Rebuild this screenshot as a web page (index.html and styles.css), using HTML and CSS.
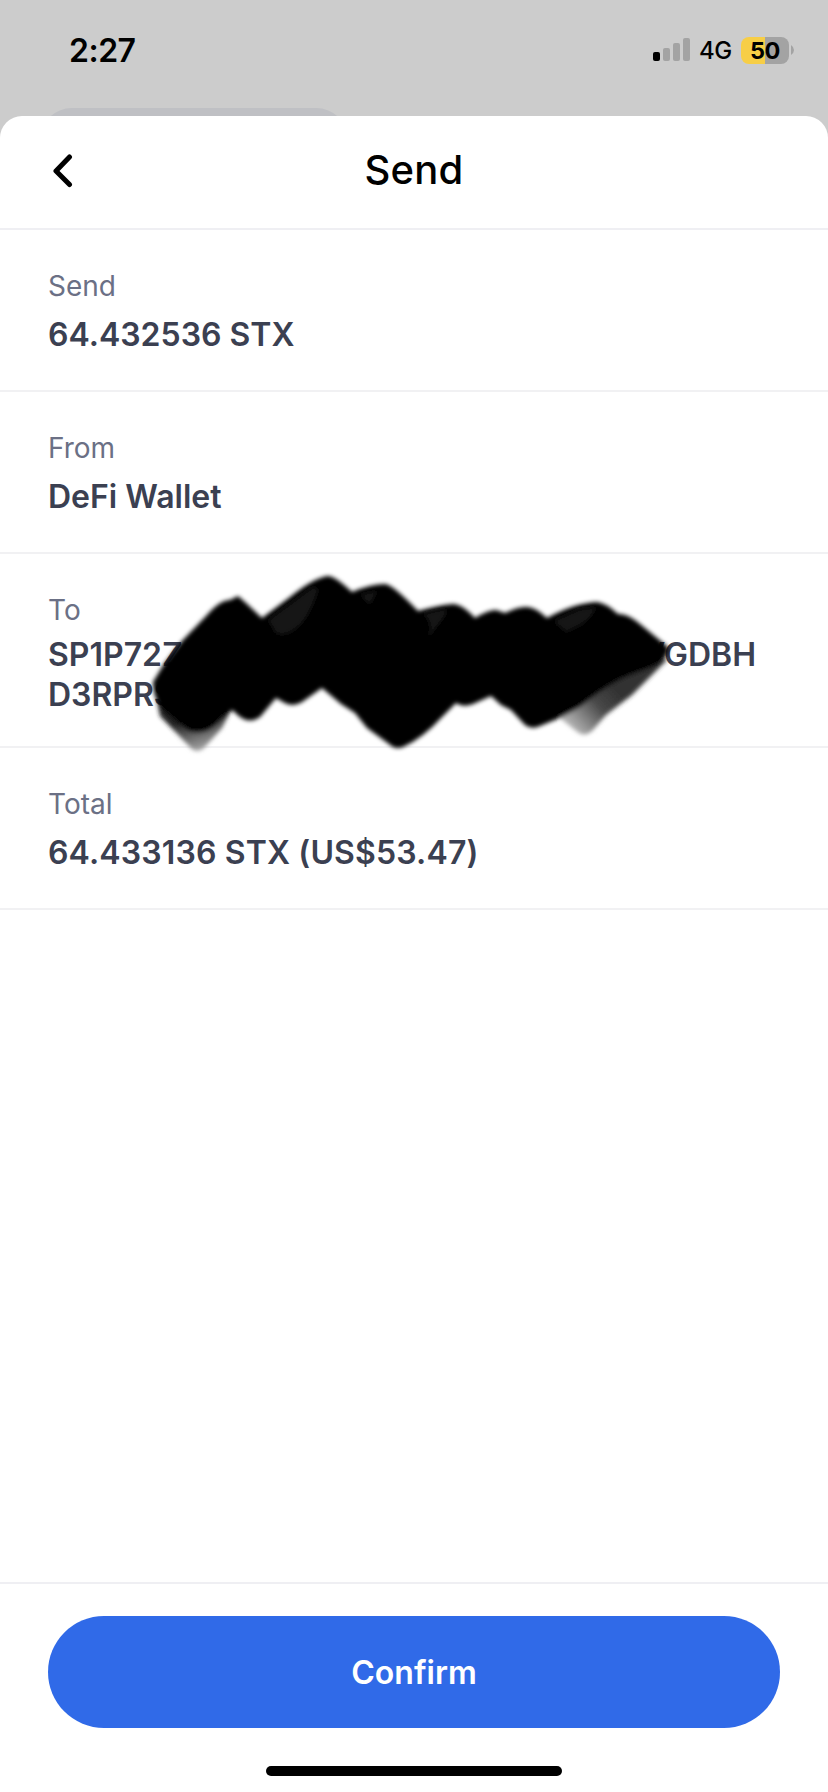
FILE: index.html
```html
<!DOCTYPE html>
<html lang="en">
<head>
<meta charset="utf-8">
<title>Send</title>
<link rel="stylesheet" href="styles.css">
</head>
<body>
<div class="screen">
  <header class="status">
    <span class="time">2:27</span>
    <div class="indicators">
      <svg class="signal" width="37" height="24" viewBox="0 0 37 24">
        <rect x="0" y="14" width="7" height="9" rx="2"/>
        <g fill="#a3a3a3"><rect x="10" y="10" width="7" height="13" rx="2"/><rect x="20" y="5" width="7" height="18" rx="2"/><rect x="30" y="0" width="7" height="23" rx="2"/></g>
      </svg>
      <span class="network">4G</span>
      <span class="battery">50</span>
      <svg class="battery-cap" width="3" height="10" viewBox="0 0 3 10"><path d="M0 0Q3 2 3 5T0 10Z" fill="#a3a3a3"/></svg>
    </div>
    <div class="behind"></div>
  </header>
  <main class="sheet">
    <div class="titlebar">
      <svg class="back" width="20" height="34" viewBox="0 0 20 34"><path d="M16.500 3L3 17L16.500 30.500" fill="none" stroke="#000" stroke-width="5" stroke-linecap="round" stroke-linejoin="round"/></svg>
      <h1 class="title">Send</h1>
    </div>
    <section class="row"><div class="label">Send</div><div class="value">64.432536 STX</div></section>
    <section class="row"><div class="label">From</div><div class="value">DeFi Wallet</div></section>
    <section class="row row-address">
      <div class="label">To</div>
      <div class="value address"><span>SP1P72Z</span><span>VGDBH</span></div>
      <div class="value">D3RPRSG</div>
      <svg class="scribble" width="560" height="200" viewBox="130 564 560 200">
        <defs>
          <filter id="soft" x="-5%" y="-10%" width="110%" height="120%"><feGaussianBlur stdDeviation="2.300"/></filter>
          <linearGradient id="tipL" gradientUnits="userSpaceOnUse" x1="188" y1="720" x2="198" y2="752"><stop offset="0" stop-color="#222"/><stop offset="1" stop-color="#aaa"/></linearGradient>
          <linearGradient id="tipR" gradientUnits="userSpaceOnUse" x1="615" y1="690" x2="574" y2="728"><stop offset="0" stop-color="#333"/><stop offset=".4" stop-color="#484848"/><stop offset="1" stop-color="#b0b0b0"/></linearGradient>
        </defs>
        <g filter="url(#soft)">
          <path fill="url(#tipL)" d="M155 690L160 716L188 745Q196 755 204 748L222 728L236 700Z"/>
          <path fill="url(#tipR)" d="M668 659L632 695L606 715L592 731Q584 738 576 731L560 718L585 688L630 662Z"/>
          <path d="M153 682L164 664L182 641L207 615Q220 600 230 600L238 596L246 603L262 618L290 597Q312 579 327 576Q334 575 352 592Q371 584 385 584Q392 584 418 611Q440 605 453 604Q462 604 475 618Q488 610 496 610L505 613Q519 606 527 607Q535 607 547 618Q574 603 597 602Q606 603 618 614Q627 613 640 624L668 647Q670 656 655 666L628 676Q608 684 580 707L562 717L540 726Q532 730 525 725L511 710L501 705L491 696L473 704Q463 708 456 703L442 717Q423 738 403 747Q395 750 389 744L367 728L355 713L341 704L322 688L302 702Q292 708 283 702L276 698L260 717Q250 724 240 717L232 710L216 725Q205 736 188 731L161 708Q153 696 153 682Z"/>
        </g>
        <g filter="url(#soft)" fill="#191919">
          <path d="M268 620L311 588Q320 585 317 594Q308 621 294 630Q281 638 275 632Z"/>
          <path d="M361 594L377 591L371 603Q366 605 361 594Z"/>
          <path d="M422 614L444 609Q450 610 442 620L428 638Q434 622 422 614Z"/>
          <path d="M553 621L580 609L596 607Q592 619 579 626L566 632Z"/>
        </g>
      </svg>
    </section>
    <section class="row"><div class="label">Total</div><div class="value total">64.433136 STX (US$53.47)</div></section>
    <footer class="footer">
      <button class="confirm">Confirm</button>
      <div class="home"></div>
    </footer>
  </main>
</div>
</body>
</html>
```
FILE: styles.css
```css
* { box-sizing: border-box; }
body { margin: 0; background: #ccc; font-family: Inter, "Liberation Sans", sans-serif; }
.screen { width: 828px; height: 1792px; display: flex; flex-direction: column; background: #ccc; overflow: hidden; }
.status { position: relative; height: 116px; flex: none; padding: 30px 34px 0 69px; display: flex; justify-content: space-between; align-items: flex-start; overflow: hidden; }
.time { font-size: 32px; line-height: 42px; font-weight: 600; letter-spacing: -.5px; }
.indicators { display: flex; align-items: center; height: 40px; }
.signal { margin-right: 9px; }
.network { width: 42px; font-size: 24px; line-height: 40px; padding-top: 2px; font-weight: 500; letter-spacing: -.5px; white-space: nowrap; }
.battery { width: 48px; height: 27px; border-radius: 8px; background: linear-gradient(90deg, #f7ce46 50%, #a3a3a3 50%); font-size: 23.5px; line-height: 27px; font-weight: 700; text-align: center; letter-spacing: -.5px; }
.battery-cap { margin-left: 2px; }
.behind { position: absolute; left: 40px; top: 108px; width: 308px; height: 64px; border-radius: 32px; background: #bfc0c4; }
.sheet { flex: 1; display: flex; flex-direction: column; background: #fff; border-radius: 22px 22px 0 0; }
.titlebar { height: 114px; display: grid; grid-template-columns: 52px 1fr 52px; align-items: start; border-bottom: 2px solid #efeff3; }
.back { justify-self: end; margin-top: 38px; margin-right: -21px; }
.title { margin: 29px 0 0; text-align: center; font-size: 40px; line-height: 50px; font-weight: 450; letter-spacing: .2px; }
.row { position: relative; padding: 36px 48px 35px; border-bottom: 2px solid #f1f1f3; }
.label { font-size: 28px; line-height: 40px; font-weight: 430; color: #6b7085; margin-bottom: 9px; }
.value { font-size: 32px; line-height: 40px; font-weight: 600; color: #3b4051; white-space: nowrap; }
.total { letter-spacing: .14px; }
.row-address { padding-bottom: 31px; }
.row-address .label { margin-bottom: 5px; }
.address { display: flex; justify-content: space-between; width: 708px; }
.scribble { position: absolute; left: 130px; top: 10px; }
.footer { margin-top: auto; height: 210px; border-top: 2px solid #efeff3; padding: 32px 48px 0; display: flex; flex-direction: column; align-items: center; }
.confirm { width: 732px; height: 112px; flex: none; border: 0; border-radius: 56px; background: #306ae8; color: #fff; font: 600 32px/40px Inter, "Liberation Sans", sans-serif; padding: 2px 0 0; }
.home { margin-top: 38px; width: 296px; height: 10px; flex: none; border-radius: 5px; background: #000; }
```
